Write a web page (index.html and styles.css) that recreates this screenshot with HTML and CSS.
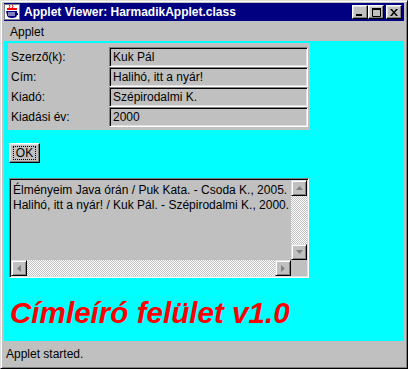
FILE: index.html
```html
<!DOCTYPE html>
<html lang="hu">
<head>
<meta charset="utf-8">
<title>Applet Viewer: HarmadikApplet.class</title>
<link rel="stylesheet" href="styles.css">
</head>
<body>
<div class="window">
  <div class="titlebar">
    <svg class="appicon" width="16" height="16" viewBox="0 0 16 16">
      <rect x="0.5" y="0.5" width="15" height="15" fill="#fff" stroke="#808080"/>
      <path d="M5 1 q2 1 0 3 M8 1 q2 1 0 3" stroke="#ff0000" fill="none" stroke-width="1"/>
      <path d="M3 4 h10 v2 h-10z" fill="#ff0000"/>
      <path d="M2 7 h11 v2 h1 v2 h-1 q0 3 -5 3 q-5 0 -5 -3z" fill="#000080"/>
      <path d="M4 9 h7 M4 11 h7" stroke="#fff" stroke-width="1"/>
    </svg>
    <span class="title">Applet Viewer: HarmadikApplet.class</span>
    <div class="tbtns">
      <div class="tbtn"><svg width="8" height="8" viewBox="0 0 8 8"><rect x="0" y="6" width="6" height="2" fill="#000"/></svg></div>
      <div class="tbtn"><svg width="9" height="9" viewBox="0 0 9 9"><path d="M0.5 1.5 h8 v7 h-8z" fill="none" stroke="#000"/><rect x="0" y="0" width="9" height="2" fill="#000"/></svg></div>
      <div class="tbtn close"><svg width="8" height="7" viewBox="0 0 8 7"><path d="M0 0h2l2 2.5L6 0h2L5 3.5 8 7H6L4 4.5 2 7H0l3-3.5z" fill="#000"/></svg></div>
    </div>
  </div>
  <div class="menubar"><span class="menuitem">Applet</span></div>
  <div class="applet">
    <div class="form">
      <div class="label">Szerző(k):</div><div class="field">Kuk Pál</div>
      <div class="label">Cím:</div><div class="field">Halihó, itt a nyár!</div>
      <div class="label">Kiadó:</div><div class="field">Szépirodalmi K.</div>
      <div class="label">Kiadási év:</div><div class="field">2000</div>
    </div>
    <div class="okbtn"><span class="focus">OK</span></div>
    <div class="textarea">
      <div class="ta-text">
        <div class="ta-line">Élményeim Java órán / Puk Kata. - Csoda K., 2005.</div>
        <div class="ta-line">Halihó, itt a nyár! / Kuk Pál. - Szépirodalmi K., 2000.</div>
      </div>
      <div class="vscroll">
        <div class="arrow"><svg width="7" height="5" viewBox="0 0 7 5"><path d="M3.5 0 L7 4 H0z" fill="#808080"/></svg></div>
        <div class="track"></div>
        <div class="arrow"><svg width="7" height="5" viewBox="0 0 7 5"><path d="M0 0 H7 L3.5 4z" fill="#808080"/></svg></div>
      </div>
      <div class="hscroll">
        <div class="arrow"><svg width="5" height="7" viewBox="0 0 5 7"><path d="M0 3.5 L4 0 V7z" fill="#808080"/></svg></div>
        <div class="track"></div>
        <div class="arrow"><svg width="5" height="7" viewBox="0 0 5 7"><path d="M0 0 L4 3.5 L0 7z" fill="#808080"/></svg></div>
      </div>
      <div class="corner"></div>
    </div>
    <div class="banner">Címleíró felület v1.0</div>
  </div>
  <div class="status">Applet started.</div>
</div>
</body>
</html>
```

FILE: styles.css
```css
* { box-sizing: border-box; }
body {
  margin: 0;
  font-family: "Liberation Sans", Arial, sans-serif;
  font-size: 12px;
  color: #000;
  background: #c0c0c0;
}
.window {
  width: 408px;
  height: 369px;
  background: #c0c0c0;
  border: 1px solid;
  border-color: #dfdfdf #000 #000 #dfdfdf;
  box-shadow: inset 1px 1px #fff, inset -1px -1px #808080;
  padding: 2px 3px 2px 3px;
  display: flex;
  flex-direction: column;
}
.titlebar {
  height: 18px;
  background: #000080;
  color: #fff;
  display: flex;
  align-items: center;
  padding-right: 2px;
  flex: none;
}
.appicon { flex: none; display: block; }
.title {
  margin-left: 4px;
  font-weight: bold;
  font-size: 12px;
  white-space: nowrap;
  flex: 1;
}
.tbtns { display: flex; }
.tbtn {
  width: 16px;
  height: 14px;
  background: #c0c0c0;
  border: 1px solid;
  border-color: #fff #000 #000 #fff;
  box-shadow: inset -1px -1px #808080, inset 1px 1px #dfdfdf;
  display: flex;
  align-items: center;
  justify-content: center;
}
.tbtn svg { display: block; }
.tbtn.close { margin-left: 2px; }
.menubar {
  margin-top: 1px;
  height: 19px;
  display: flex;
  align-items: center;
  padding-left: 6px;
  flex: none;
}
.applet {
  height: 300px;
  flex: none;
  background: #00ffff;
  padding: 2px 0 0 4px;
}
.form {
  width: 302px;
  background: #c0c0c0;
  padding: 4px 2px 3px 3px;
  display: grid;
  grid-template-columns: 98px 199px;
  grid-auto-rows: 20px;
}
.label {
  line-height: 20px;
  white-space: nowrap;
}
.field {
  border: 1px solid;
  border-color: #808080 #fff #fff #808080;
  box-shadow: inset 1px 1px #000, inset -1px -1px #dfdfdf;
  padding-left: 3px;
  display: flex;
  align-items: center;
  white-space: nowrap;
}
.okbtn {
  margin: 13px 0 0 1px;
  width: 31px;
  height: 20px;
  background: #c0c0c0;
  border: 1px solid;
  border-color: #fff #000 #000 #fff;
  box-shadow: inset -1px -1px #808080, inset 1px 1px #dfdfdf;
  display: flex;
  align-items: center;
  justify-content: center;
}
.focus {
  border: 1px dotted #000;
  padding: 0 2px;
  line-height: 12px;
}
.textarea {
  margin: 15px 0 0 1px;
  width: 300px;
  height: 100px;
  border: 1px solid;
  border-color: #808080 #fff #fff #808080;
  box-shadow: inset 1px 1px #000, inset -1px -1px #dfdfdf;
  padding: 1px;
  background: #c0c0c0;
  display: grid;
  grid-template-columns: 1fr 16px;
  grid-template-rows: 1fr 16px;
}
.ta-text {
  overflow: hidden;
  padding: 3px 0 0 2px;
  line-height: 15px;
  white-space: nowrap;
}
.vscroll { display: flex; flex-direction: column; }
.hscroll { display: flex; }
.track {
  flex: 1;
  background-image: repeating-conic-gradient(#c0c0c0 0% 25%, #fff 0% 50%);
  background-size: 2px 2px;
}
.arrow {
  width: 16px;
  height: 16px;
  flex: none;
  background: #c0c0c0;
  border: 1px solid;
  border-color: #dfdfdf #000 #000 #dfdfdf;
  box-shadow: inset 1px 1px #fff, inset -1px -1px #808080;
  display: flex;
  align-items: center;
  justify-content: center;
}
.arrow svg { display: block; }
.corner { background: #c0c0c0; }
.banner {
  margin: 18px 0 0 2px;
  color: #ff0000;
  font-weight: bold;
  font-style: italic;
  font-size: 29.6px;
  line-height: 34px;
  white-space: nowrap;
}
.status {
  height: 25px;
  flex: none;
  display: flex;
  align-items: center;
  padding-left: 2px;
}
```
